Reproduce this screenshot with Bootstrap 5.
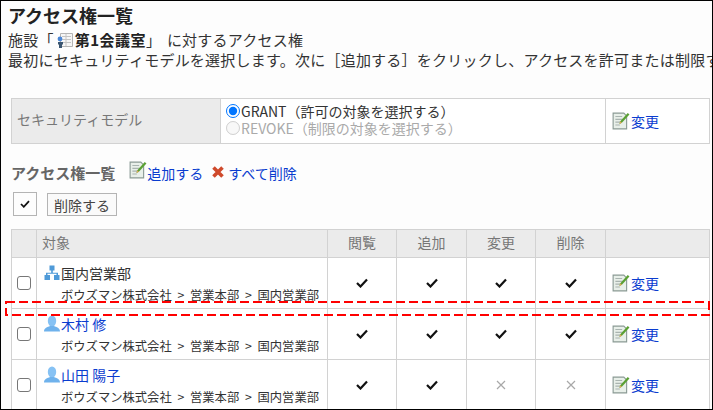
<!DOCTYPE html>
<html lang="ja">
<head>
    <meta charset="UTF-8">
    <title>アクセス権一覧</title>
    <link href="https://cdn.jsdelivr.net/npm/bootstrap@5.3.0/dist/css/bootstrap.min.css" rel="stylesheet">
    <style>
        html, body { margin: 0; height: 410px; overflow: hidden; background: #fdfdfd; }
        body { font-family: "Noto Sans CJK JP", "Noto Sans", sans-serif; font-size: 14px; color: #333; }
        a { color: #0a3ccf; text-decoration: none; }
        .shot-frame { position: relative; height: 410px; padding: 0 2px 0 10px; border: 1px solid #000; overflow: hidden; }
        .page-title { font-size: 18px; font-weight: 700; line-height: 24px; margin: 2px 0 0 -3px; color: #222; }
        .intro-text { font-size: 15px; line-height: 19px; margin: 3px 0 0 -3px; white-space: nowrap; letter-spacing: .23px; word-spacing: 2px; }
        .intro-text b { color: #222; letter-spacing: .5px; }
        .room-icon { width: 18px; height: 18px; vertical-align: -4px; margin: 0 1px 0 2px; }
        .perm-table { width: 699px; table-layout: fixed; border-collapse: collapse; background: #fff; margin: 0; }
        .perm-table th, .perm-table td { border: 1px solid #d2d2d2; padding: 0; font-weight: 400; }
        .perm-table th { background: #ebebeb; color: #777; }
        .model-table { margin-top: 29px; height: 46px; }
        .model-table th { padding: 0 0 4px 5px; font-size: 14px; }
        .model-table td { line-height: 16px; font-size: 14px; padding: 0 5px 4px; }
        .model-opt { display: flex; align-items: center; white-space: nowrap; height: 17px; }
        .model-opt input { margin: 0 1px 0 0; width: 14px; height: 14px; }
        .model-off { color: #aaa; }
        .list-head { margin: 17px 0 0 0; height: 24px; white-space: nowrap; }
        .list-head b { color: #666; font-size: 15px; margin-right: 14px; }
        .list-head a { margin-right: 8px; font-size: 14px; }
        .list-head .edit-icon { margin: 0 0 6px 0; }
        .edit-icon { width: 18px; height: 18px; flex: none; margin-right: 1px; }
        .edit-link { display: flex; align-items: center; padding-left: 6px; font-size: 14px; }
        .del-icon { width: 14px; height: 14px; margin: 0 3px 2px 0; flex: none; }
        .tool-row { margin: 7px 0 0 2px; height: 24px; gap: 10px; }
        .toggle-btn { width: 24px; height: 24px; border: 1px solid #b4b4b4; background: #fdfdfd; padding: 0; display: flex; align-items: center; justify-content: center; }
        .toggle-btn svg { width: 10px; height: 8px; }
        .del-btn { height: 23px; margin-top: 1px; width: 70px; border: 1px solid #b4b4b4; background: #fafafa; padding: 0; font-size: 14px; color: #444; line-height: 20px; }
        .list-table { margin-top: 13px; }
        .list-table th { height: 28px; font-size: 14px; text-align: center; padding-bottom: 2px; }
        .list-table th.target-col { text-align: left; padding-left: 5px; }
        .list-table td { height: 51px; text-align: center; }
        .list-table td.target-col { text-align: left; padding: 5px 0 0 6px; vertical-align: top; }
        .row-check { width: 14px; height: 14px; display: block; margin: 0 auto; border: 1px solid #777; border-radius: 3px; background: #fff; appearance: none; }
        .target-name { display: flex; align-items: center; height: 20px; font-size: 14px; line-height: 20px; white-space: nowrap; color: #333; }
        .target-name svg { width: 18px; height: 18px; flex: none; margin-right: 0; }
        .target-path { font-size: 12.3px; line-height: 18px; margin: 3px 0 0 18px; white-space: nowrap; color: #333; word-spacing: 3px; }
        .ok-mark { width: 12px; height: 10px; display: block; margin: 0 auto; }
        .no-mark { width: 10px; height: 10px; display: block; margin: 0 auto; }
        .callout-box { position: absolute; left: 4px; top: 300px; width: 706px; height: 16px; pointer-events: none; }
    </style>
</head>
<body>
    <svg width="0" height="0" class="d-none">
        <symbol id="editIco" viewBox="0 0 16 16">
            <path d="M1 1h9.500L13 3.500V15H1z" fill="#e8efe9" stroke="#8a9a94"/>
            <path d="M3 4h6M3 6.500h7M3 9h5M3 11.500h4" stroke="#a9b4b0"/>
            <path d="M14 .8l1.500 1.400L8.800 9.600 6.600 10.700 7.400 8.300z" fill="#5aa033"/>
            <path d="M6.600 10.700l.8-2.400 1.400 1.300z" fill="#e2a85a"/>
        </symbol>
        <symbol id="personIco" viewBox="0 0 18 18">
            <ellipse cx="9" cy="6" rx="4.200" ry="5.500" fill="#86c2f4"/>
            <path d="M1 16.500c0-3.500 3.500-4.500 6-5.500h4c2.500 1 6 2 6 5.500z" fill="#6fb2ec"/>
        </symbol>
        <symbol id="okIco" viewBox="0 0 12 10">
            <path d="M1 5l3.500 3.500L11 1.500" fill="none" stroke="#111" stroke-width="2.200"/>
        </symbol>
        <symbol id="noIco" viewBox="0 0 10 10">
            <path d="M1 1l8 8M9 1l-8 8" stroke="#a8a8a8" stroke-width="1.200"/>
        </symbol>
    </svg>

    <div class="shot-frame">
        <h1 class="page-title">アクセス権一覧</h1>
        <div class="intro-text">
            施設「<svg class="room-icon" viewBox="0 0 18 18"><path d="M4.500 1.500h12v13h-12z" fill="#f6f6f6" stroke="#b4b4b4"/><path d="M6 4.500h9M6 7.500h9M6 10.500h9M10 2v12" stroke="#c4c4c4"/><circle cx="4" cy="7" r="2.400" fill="#4a86d6"/><path d="M2 10h5v2.500H6V16H3v-3.500H2z" fill="#3a5570"/></svg><b>第1会議室</b>」 に対するアクセス権<br>
            最初にセキュリティモデルを選択します。次に［追加する］をクリックし、アクセスを許可または制限する対象を追加します。
        </div>

        <table class="perm-table model-table">
            <colgroup><col style="width:209px"><col style="width:385px"><col></colgroup>
            <tr>
                <th>セキュリティモデル</th>
                <td>
                    <label class="model-opt"><input type="radio" name="model" checked>GRANT（許可の対象を選択する）</label>
                    <label class="model-opt model-off"><input type="radio" name="model" disabled>REVOKE（制限の対象を選択する）</label>
                </td>
                <td class="p-0"><a class="edit-link" href="#"><svg class="edit-icon"><use href="#editIco"/></svg>変更</a></td>
            </tr>
        </table>

        <div class="list-head d-flex align-items-center">
            <b>アクセス権一覧</b><a class="d-flex align-items-center" href="#"><svg class="edit-icon"><use href="#editIco"/></svg>追加する</a><a class="d-flex align-items-center" href="#"><svg class="del-icon" viewBox="0 0 14 14"><path d="M2.500 2.500l9 9M11.500 2.500l-9 9" stroke="#cf4a2c" stroke-width="3.600"/></svg>すべて削除</a>
        </div>

        <div class="tool-row d-flex">
            <button class="toggle-btn"><svg class="ok-mark"><use href="#okIco"/></svg></button>
            <button class="del-btn">削除する</button>
        </div>

        <table class="perm-table list-table">
            <colgroup><col style="width:25px"><col style="width:291px"><col style="width:69px"><col style="width:70px"><col style="width:69px"><col style="width:70px"><col></colgroup>
            <tr>
                <th></th><th class="target-col">対象</th><th>閲覧</th><th>追加</th><th>変更</th><th>削除</th><th></th>
            </tr>
            <tr>
                <td><input class="row-check" type="checkbox"></td>
                <td class="target-col">
                    <div class="target-name"><svg viewBox="0 0 18 18"><path d="M6.500 1.500h5v5h-5zM8.200 6.500h1.600v2.300H15V11h-1.500V9.800H4.500V11H3V8.800h5.200z" fill="#4f9ad8"/><path d="M1.500 11h5.500v5H1.500zM11 11h5.500v5H11z" fill="#4f9ad8"/></svg>国内営業部</div>
                    <div class="target-path">ボウズマン株式会社 &gt; 営業本部 &gt; 国内営業部</div>
                </td>
                <td><svg class="ok-mark"><use href="#okIco"/></svg></td>
                <td><svg class="ok-mark"><use href="#okIco"/></svg></td>
                <td><svg class="ok-mark"><use href="#okIco"/></svg></td>
                <td><svg class="ok-mark"><use href="#okIco"/></svg></td>
                <td><a class="edit-link" href="#"><svg class="edit-icon"><use href="#editIco"/></svg>変更</a></td>
            </tr>
            <tr>
                <td><input class="row-check" type="checkbox"></td>
                <td class="target-col">
                    <div class="target-name"><svg><use href="#personIco"/></svg><a href="#">木村 修</a></div>
                    <div class="target-path">ボウズマン株式会社 &gt; 営業本部 &gt; 国内営業部</div>
                </td>
                <td><svg class="ok-mark"><use href="#okIco"/></svg></td>
                <td><svg class="ok-mark"><use href="#okIco"/></svg></td>
                <td><svg class="ok-mark"><use href="#okIco"/></svg></td>
                <td><svg class="ok-mark"><use href="#okIco"/></svg></td>
                <td><a class="edit-link" href="#"><svg class="edit-icon"><use href="#editIco"/></svg>変更</a></td>
            </tr>
            <tr>
                <td><input class="row-check" type="checkbox"></td>
                <td class="target-col">
                    <div class="target-name"><svg><use href="#personIco"/></svg><a href="#">山田 陽子</a></div>
                    <div class="target-path">ボウズマン株式会社 &gt; 営業本部 &gt; 国内営業部</div>
                </td>
                <td><svg class="ok-mark"><use href="#okIco"/></svg></td>
                <td><svg class="ok-mark"><use href="#okIco"/></svg></td>
                <td><svg class="no-mark"><use href="#noIco"/></svg></td>
                <td><svg class="no-mark"><use href="#noIco"/></svg></td>
                <td><a class="edit-link" href="#"><svg class="edit-icon"><use href="#editIco"/></svg>変更</a></td>
            </tr>
        </table>

        <svg class="callout-box"><rect x="1" y="1" width="703" height="13" fill="none" stroke="#f00" stroke-width="2" stroke-dasharray="9 4"/></svg>
    </div>
    <script src="https://cdn.jsdelivr.net/npm/bootstrap@5.3.0/dist/js/bootstrap.bundle.min.js"></script>
</body>
</html>
